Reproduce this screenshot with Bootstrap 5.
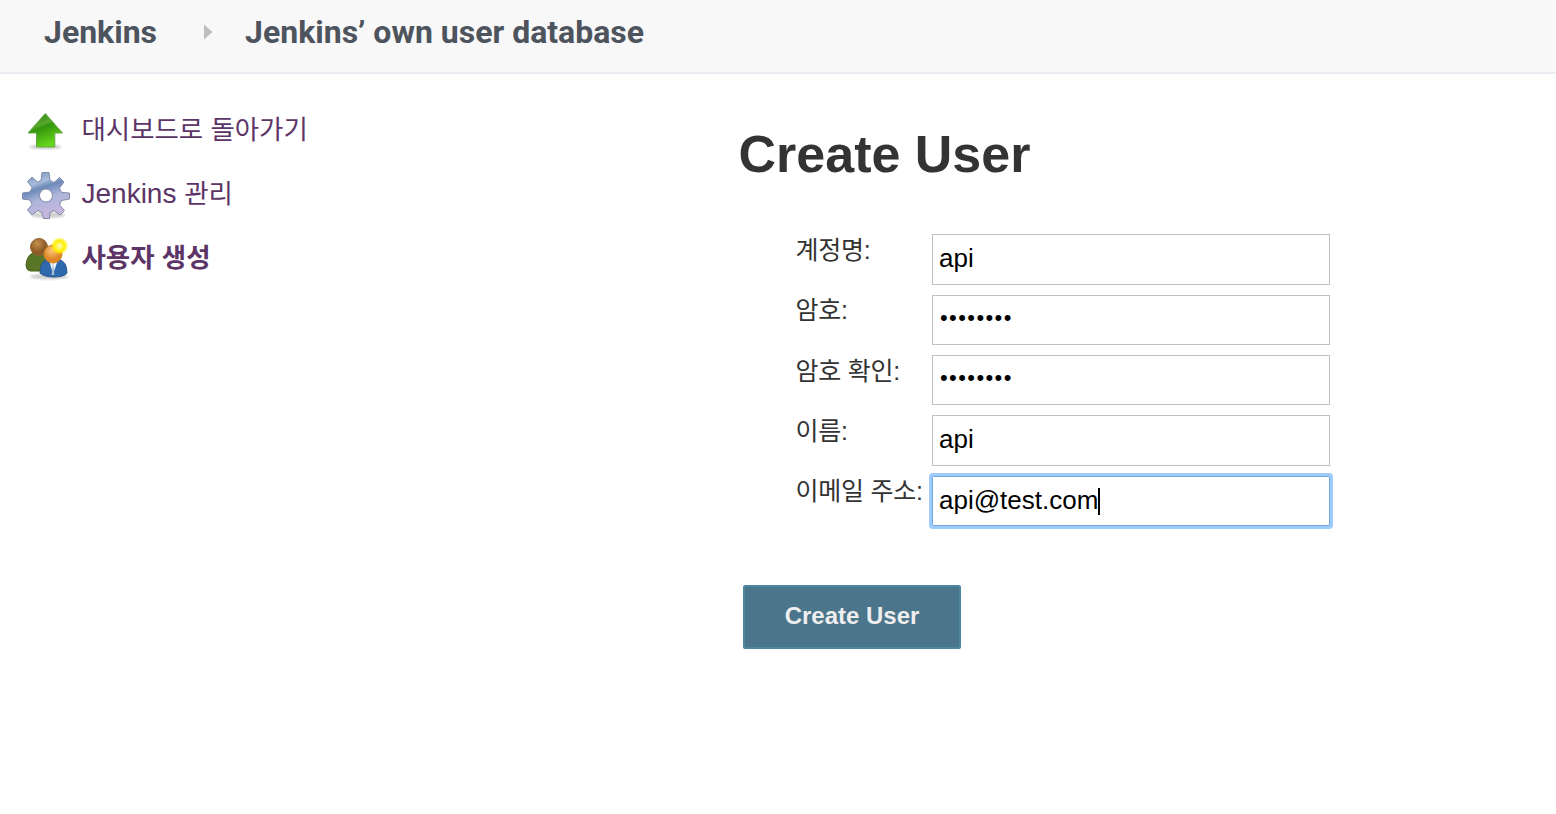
<!DOCTYPE html>
<html lang="ko">
<head>
<meta charset="utf-8">
<meta name="viewport" content="width=device-width, initial-scale=1">
<title>Create User [Jenkins]</title>
<link href="https://cdn.jsdelivr.net/npm/bootstrap@5.3.0/dist/css/bootstrap.min.css" rel="stylesheet">
<style>
body{font-family:"Liberation Sans","Noto Sans CJK KR",sans-serif;color:#333;background:#fff;min-height:814px;overflow:hidden}
.crumbs{height:74px;background:#f8f8f8;border-bottom:2px solid #e9edf1;padding:8px 0 0 44px;font:700 32px/48px Roboto,sans-serif;color:#4d545d}
.crumbs a{color:inherit}
.crumbs svg{margin:0 32px 0 46px}
.tasks{width:739px;padding:34px 0 0 22px}
.task-link{height:64px;font-size:28px;line-height:44px;color:#5c3566;gap:11.5px}
.task-link svg{width:48px;height:48px;flex:none;filter:blur(.5px)}
.ko{font-size:26.5px;letter-spacing:-.05px}
.task-link b{font-weight:700}
.page-title{font-size:52px;font-weight:700;line-height:60px;margin:50px 0 50px -.5px;color:#333}
.field{height:60.35px;padding-left:56.5px}
.field label{width:136.5px;font-size:25px;line-height:33px;letter-spacing:-.25px;white-space:nowrap;flex:none}
.field .form-control{width:398px;height:51px;border:1px solid #bfbfbf;border-radius:0;padding:0 6px 3px;font-size:26px;line-height:40px;color:#000;background:#fff}
.field input[type=password]{height:50px;margin-top:.3px;padding:0 7px 3px;font-size:22px;letter-spacing:1.4px}
.field .form-control.is-active{height:50px;margin-top:1px;padding-bottom:2px;border-color:#72a7dc;box-shadow:none;outline:3px solid #9dccfc;outline-offset:0;border-radius:1px}
.caret{position:absolute;left:166px;top:13px;width:2px;height:27px;background:#000}
.btn-create{width:218px;height:64px;margin:49px 0 0 4px;border:2px solid #4f87a1;border-radius:2px;background:#4b758b;color:#eee;font-size:24px;font-weight:700;padding:0 0 2px}
</style>
</head>
<body>
<header class="crumbs d-flex align-items-start">
  <a class="text-decoration-none" href="#">Jenkins</a>
  <svg class="mt-3" width="10" height="16" viewBox="0 0 10 16"><path d="M1 .5 9.500 8 1 15.500z" fill="#bfbfbf"/></svg>
  <a class="text-decoration-none" href="#">Jenkins’ own user database</a>
</header>
<div class="d-flex">
  <nav class="tasks flex-shrink-0 d-flex flex-column">
    <a class="task-link d-flex text-decoration-none" href="#">
      <svg viewBox="0 0 48 48"><defs><linearGradient id="ga" x2=".4" y2="1"><stop stop-color="#267f12"/><stop offset=".42" stop-color="#58a72b"/><stop offset=".5" stop-color="#32950d"/><stop offset="1" stop-color="#64d51b"/></linearGradient><filter id="soft"><feGaussianBlur stdDeviation="1"/></filter></defs><ellipse cx="23.500" cy="39" rx="16" ry="2.500" fill="#777" opacity=".35" filter="url(#soft)"/><path d="M23.300 5.500 40.500 25h-7.700v14H14.500V25H6z" fill="url(#ga)" stroke="#66a949" stroke-linejoin="round"/></svg>
      <span class="ko">대시보드로 돌아가기</span>
    </a>
    <a class="task-link d-flex text-decoration-none" href="#">
      <svg viewBox="0 0 48 48"><defs><linearGradient id="gb" x2=".35" y2="1"><stop stop-color="#6488b6"/><stop offset=".3" stop-color="#a9bcd9"/><stop offset=".42" stop-color="#6d8ab9"/><stop offset=".65" stop-color="#aeb6dc"/><stop offset="1" stop-color="#c7b5df"/></linearGradient></defs><ellipse cx="26" cy="43" rx="17" ry="3" fill="#777" opacity=".35" filter="url(#soft)"/><path fill="url(#gb)" fill-rule="evenodd" stroke="#7f8ba7" stroke-linejoin="round" d="M20 .5h7l1 8 4 2 5.500-5 4.500 4.500-4.500 6 2 4.500 8 .5v6l-8 1.500-2 4.500 5 5.500-4.500 4.500-6-4.500-4 2-.5 6h-6l-1.500-6-4-2-6 4.500L5.500 38l4.500-5.500-2-4.500-7.500-1v-6l7.500-1 2-4.500-4.500-6L10 5l5.500 5 3.500-1.500zM24 17a6.500 6.500 0 1 0 0 13 6.500 6.500 0 0 0 0-13z"/></svg>
      <span>Jenkins <span class="ko">관리</span></span>
    </a>
    <a class="task-link d-flex text-decoration-none" href="#">
      <svg viewBox="0 0 48 48"><defs><radialGradient id="brown" cx=".4" cy=".3"><stop stop-color="#c79150"/><stop offset="1" stop-color="#8c5924"/></radialGradient><radialGradient id="face" cx=".45" cy=".3"><stop stop-color="#ffc680"/><stop offset="1" stop-color="#df8627"/></radialGradient><radialGradient id="sun"><stop stop-color="#fffbd0"/><stop offset=".25" stop-color="#fff56c"/><stop offset=".6" stop-color="#fff000"/><stop offset="1" stop-color="#fff000" stop-opacity="0"/></radialGradient></defs><ellipse cx="27" cy="40.500" rx="19" ry="3" fill="#777" opacity=".35" filter="url(#soft)"/><path d="M4 29q1-13 12-13 13 0 14 12l-4 7H8q-4-1-4-6z" fill="#587625" stroke="#46601a"/><circle cx="17" cy="11" r="8.500" fill="url(#brown)" stroke="#916334"/><path d="M18 37q0-12 8-14h10q9 2 9 14-3 4-13 4t-14-4z" fill="#2e68ad" stroke="#285892"/><path d="M27 24l4 14 5-14z" fill="#f1f4fa"/><path d="m31 26-1.500 13h3z" fill="#a6bad5"/><circle cx="31" cy="18" r="9" fill="url(#face)" stroke="#cc832e"/><circle cx="37.500" cy="10" r="9" fill="url(#sun)"/></svg>
      <b class="ko">사용자 생성</b>
    </a>
  </nav>
  <main>
    <h1 class="page-title">Create User</h1>
    <form>
      <div class="field d-flex"><label for="user">계정명:</label><input id="user" class="form-control shadow-none" value="api"></div>
      <div class="field d-flex"><label for="pw1">암호:</label><input id="pw1" type="password" class="form-control shadow-none" value="password"></div>
      <div class="field d-flex"><label for="pw2">암호 확인:</label><input id="pw2" type="password" class="form-control shadow-none" value="password"></div>
      <div class="field d-flex"><label for="name">이름:</label><input id="name" class="form-control shadow-none" value="api"></div>
      <div class="field d-flex"><label for="mail">이메일 주소:</label><div class="position-relative"><input id="mail" class="form-control is-active" value="api@test.com"><i class="caret"></i></div></div>
      <button type="button" class="btn btn-create">Create User</button>
    </form>
  </main>
</div>
<script src="https://cdn.jsdelivr.net/npm/bootstrap@5.3.0/dist/js/bootstrap.bundle.min.js"></script>
</body>
</html>
